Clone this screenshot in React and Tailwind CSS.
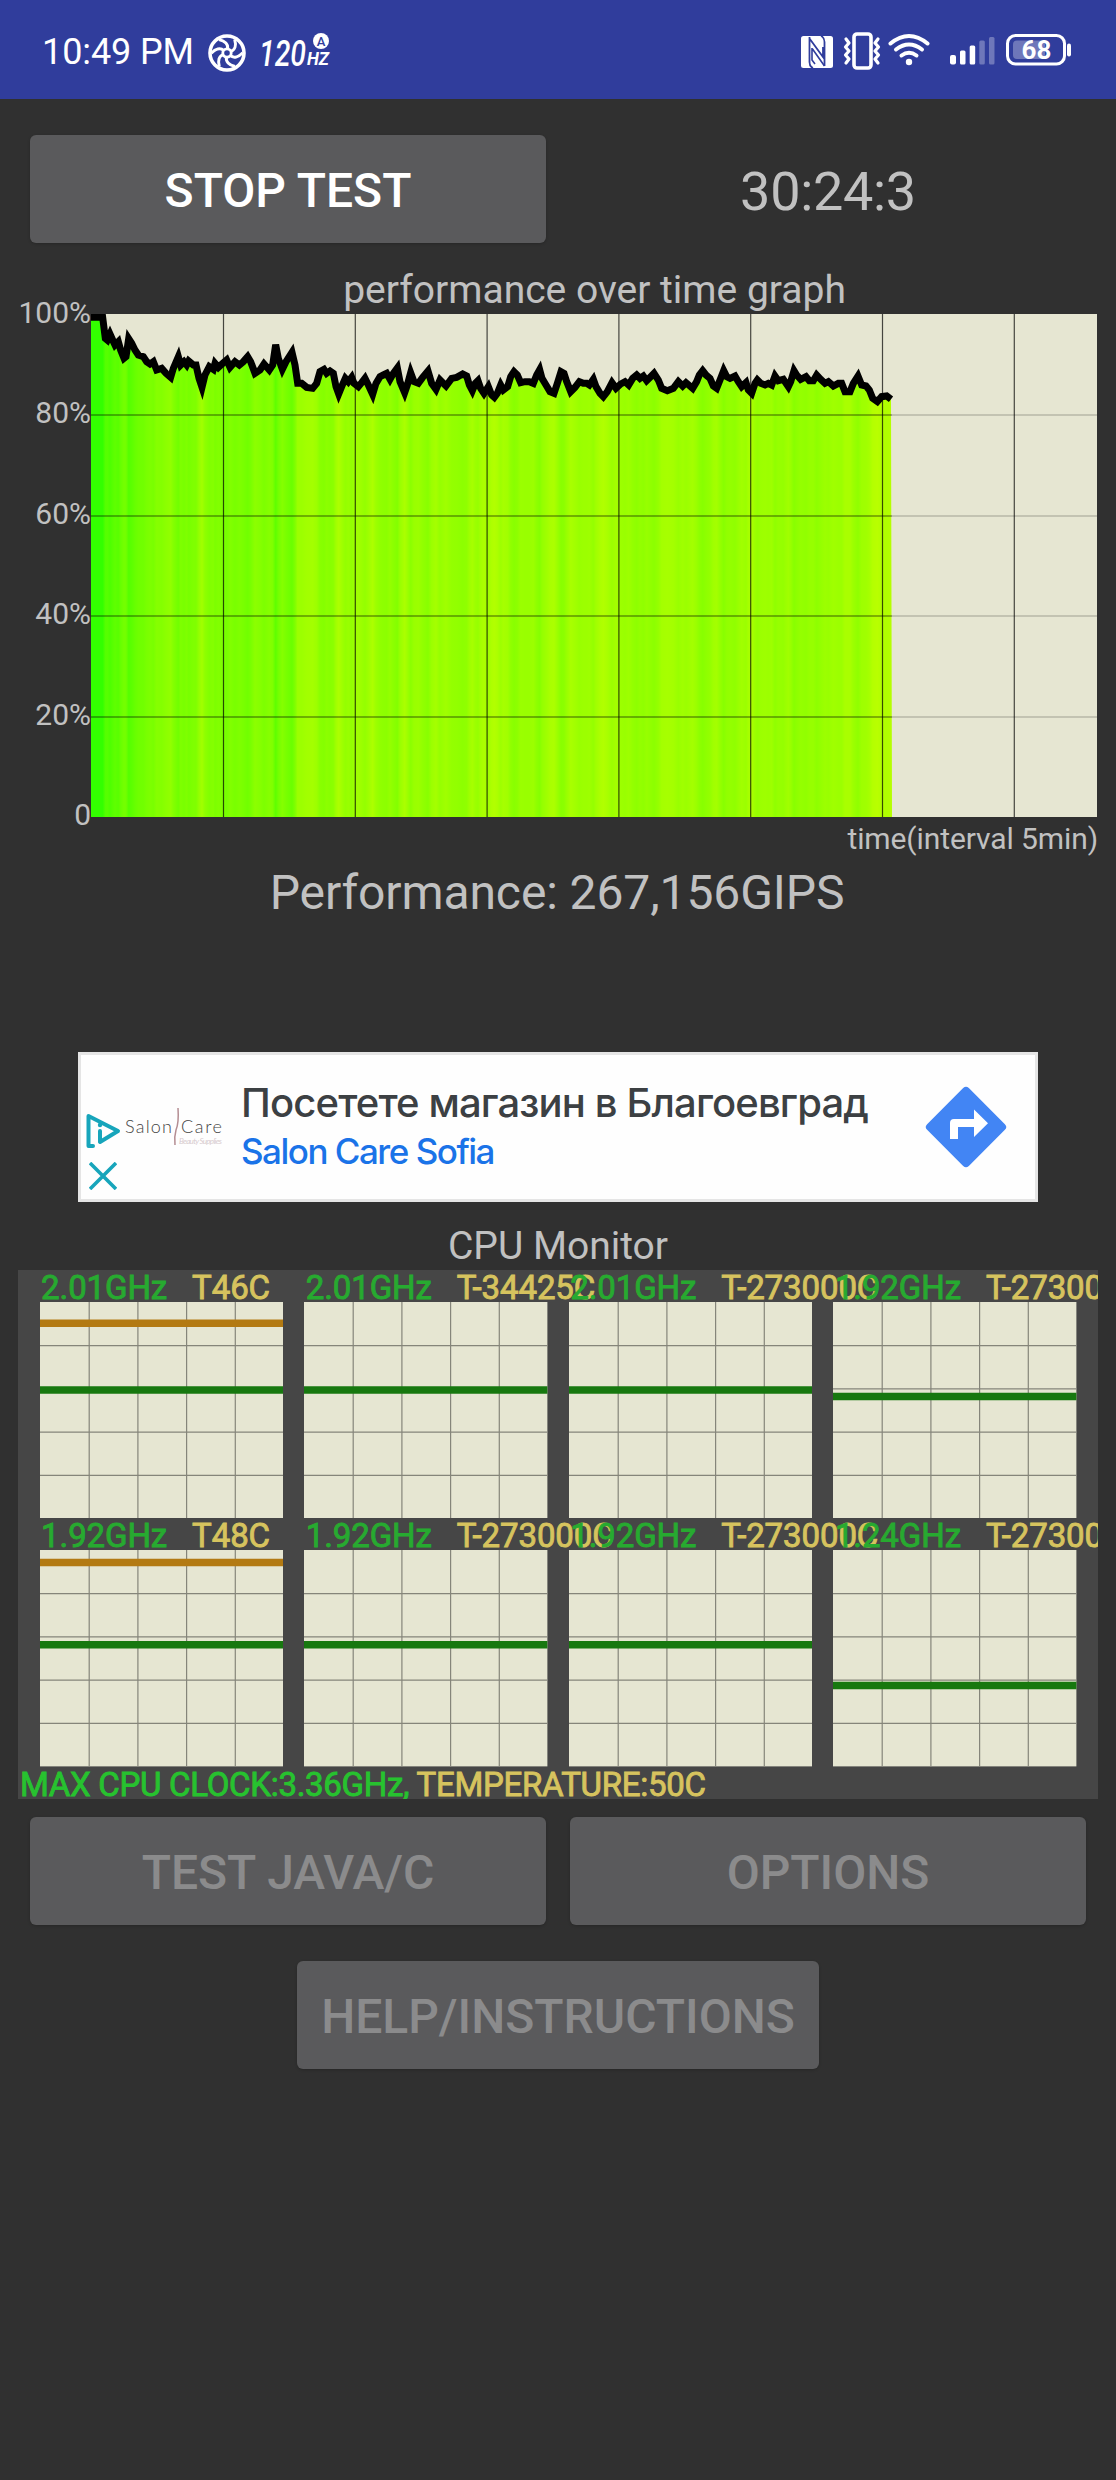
import React from 'react'

// trace samples as [x, y], in thirds of a pixel from the plot's top left corner
const firstTrace = [
  [0, 10], [35, 10], [43, 73], [49, 78], [57, 60], [65, 78], [72, 93], [82, 83], [89, 108], [99, 133],
  [105, 128], [113, 74], [122, 88], [132, 108], [142, 123], [157, 128], [167, 143], [177, 150], [187, 143], [197, 168],
  [212, 163], [225, 178], [239, 190], [247, 163], [262, 128], [269, 153], [279, 143], [287, 153], [293, 141], [307, 153],
  [315, 153], [324, 193], [333, 220], [342, 183], [355, 158], [367, 166], [372, 148], [382, 160], [395, 148], [407, 138],
  [417, 160], [432, 143], [445, 153], [457, 143], [470, 128], [479, 143], [492, 178], [507, 168], [519, 150], [535, 168],
  [545, 153], [554, 92], [562, 133], [574, 166], [585, 143], [603, 115], [612, 153], [620, 208], [632, 208], [647, 220],
  [665, 223], [677, 208], [687, 173], [699, 166], [707, 178], [717, 171], [727, 178], [735, 218], [743, 240], [752, 218],
  [763, 193], [772, 203], [782, 190], [789, 208], [802, 218], [812, 206], [822, 193], [832, 213], [845, 241], [855, 208],
  [867, 188], [877, 183], [887, 178], [897, 196], [907, 178], [919, 162], [927, 203], [941, 236], [949, 213], [959, 176],
  [969, 203], [982, 208], [995, 190], [1011, 171], [1022, 208], [1035, 226],
]

const secondTrace = [
  [0, 198], [18, 216], [35, 193], [50, 190], [68, 180], [80, 186], [88, 213], [97, 230], [106, 208], [114, 200],
  [122, 223], [132, 238], [145, 218], [155, 243], [163, 250], [172, 238], [182, 213], [190, 228], [203, 218], [212, 188],
  [222, 173], [232, 183], [242, 206], [255, 203], [268, 203], [280, 208], [290, 183], [299, 167], [306, 193], [318, 213],
  [330, 233], [342, 238], [352, 208], [363, 173], [372, 178], [380, 203], [392, 233], [405, 220], [418, 203], [430, 208],
  [440, 208], [448, 213], [460, 196], [468, 218], [480, 238], [490, 248], [502, 233], [516, 206], [528, 223], [542, 210],
  [555, 203], [566, 213], [578, 193], [590, 183], [600, 193], [610, 186], [620, 200], [632, 188], [642, 178], [655, 198],
  [665, 223], [682, 230], [700, 223], [715, 203], [728, 216], [738, 206], [758, 223], [770, 203], [778, 183], [788, 170],
  [798, 183], [810, 193], [820, 216], [830, 223], [840, 198], [851, 170], [860, 188], [870, 193], [885, 186], [895, 203],
  [905, 218], [918, 206], [925, 228], [935, 238], [945, 208], [952, 198], [962, 208], [975, 213], [985, 208], [995, 213],
  [1005, 186], [1015, 200], [1030, 196], [1045, 218], [1052, 203], [1062, 170], [1070, 183], [1082, 196], [1098, 188], [1108, 200],
  [1120, 200], [1130, 183], [1142, 196], [1155, 208], [1165, 203], [1180, 216], [1195, 208], [1205, 208], [1215, 233], [1230, 233],
  [1240, 208], [1254, 186], [1265, 213], [1278, 216], [1288, 228], [1298, 253], [1312, 263], [1325, 248], [1340, 246], [1353, 256],
]

const samples = [...firstTrace, ...secondTrace.map(([x, y]) => [x + 1047, y])].map(([x, y]) => [x / 3, y / 3])

const PLOT_W = 1006
const PLOT_H = 503
const DATA_W = 801

// full speed is green, slower gets more yellow
const speedColor = (y) => {
  const lost = Math.max(0, (y / PLOT_H) * 100 - 0.7)
  return `rgb(${Math.round(51 + lost * 8)},255,0)`
}

const cores = [
  { clock: '2.01GHz', temp: 'T46C', clockY: 88, tempY: 21.2 },
  { clock: '2.01GHz', temp: 'T-34425C', clockY: 88 },
  { clock: '2.01GHz', temp: 'T-273000C', clockY: 88 },
  { clock: '1.92GHz', temp: 'T-273000C', clockY: 94.4 },
  { clock: '1.92GHz', temp: 'T48C', clockY: 94.8, tempY: 12.6 },
  { clock: '1.92GHz', temp: 'T-273000C', clockY: 94.8 },
  { clock: '1.92GHz', temp: 'T-273000C', clockY: 94.8 },
  { clock: '1.24GHz', temp: 'T-273000C', clockY: 135.6 },
]

const StatusBar = () => (
  <header className="h-[99px] bg-[#303d9c] flex items-center text-white pl-[42px] pr-[44px] pt-[6px]">
    <span className="text-[36px] leading-[44px] w-[166px] pb-[2px] tracking-[-0.1px] whitespace-nowrap">10:49 PM</span>
    <svg width="38" height="38" viewBox="0 0 38 38" fill="none" stroke="currentColor">
      <circle cx="19" cy="19" r="17" strokeWidth="3.6" />
      <circle cx="19" cy="19" r="4.2" strokeWidth="2.8" />
      {[0, 60, 120, 180, 240, 300].map((a) => (
        <path key={a} d="M19.5 15 C20.5 10.5 17 7 11 5.5" strokeWidth="3" transform={`rotate(${a} 19 19)`} />
      ))}
    </svg>
    <svg className="ml-[12px]" width="75" height="44" viewBox="0 0 75 44" fill="currentColor">
      <text x="1" y="35" fontSize="37" fontStyle="italic" fontWeight="500" textLength="47" lengthAdjust="spacingAndGlyphs">120</text>
      <text x="49" y="34" fontSize="18" fontStyle="italic" fontWeight="700" textLength="22" lengthAdjust="spacingAndGlyphs">HZ</text>
      <circle cx="63" cy="10" r="8" />
      <text x="63" y="14.5" fontSize="13" fontWeight="500" textAnchor="middle" fill="#303d9c">A</text>
    </svg>

    <div className="ml-auto flex items-center">
      <svg className="-mt-[2px]" width="32" height="32" viewBox="0 0 32 32">
        <rect width="32" height="32" rx="2.5" fill="#fff" />
        <path d="M8.5 1 V26 Q8.5 30.5 12 32 M8.5 2.5 L22 21 V11 M23.5 30 V6 Q23.5 1.5 20 0" fill="none" stroke="#303d9c" strokeWidth="1.8" />
        <path d="M11.5 13 L23.5 30 M11 12 V24 L14 28" fill="none" stroke="#303d9c" strokeWidth="1.6" />
      </svg>
      <svg className="ml-[10px] -mt-[4px]" width="38" height="38" viewBox="0 0 38 38" fill="none" stroke="#fff" strokeWidth="3.2" strokeLinecap="round" strokeLinejoin="round">
        <rect x="11" y="2" width="17" height="34" rx="3" strokeWidth="3.6" />
        <path d="M3 7 L6 11 L2.5 15 L6 19 L2.5 23 L6 27 L3 31" />
        <path d="M35 7 L32 11 L35.5 15 L32 19 L35.5 23 L32 27 L35 31" />
      </svg>
      <svg className="ml-[7px] -mt-[6px]" width="42" height="34" viewBox="0 0 42 34" fill="none" stroke="#fff" strokeWidth="4" strokeLinecap="round">
        <path d="M2.5 10.5 Q21 -4.5 39.5 10.5" />
        <path d="M8 16.5 Q21 6.5 34 16.5" />
        <path d="M13.5 22.5 Q21 17 28.5 22.5" />
        <circle cx="21" cy="29" r="3.2" fill="#fff" stroke="none" />
      </svg>
      <svg className="ml-[20px]" width="46" height="32" viewBox="0 0 46 32" fill="#fff">
        <rect x="0" y="18" width="6" height="9.5" rx="2" />
        <rect x="10" y="13.5" width="5.5" height="14" rx="1.5" />
        <rect x="19.7" y="8.5" width="5.5" height="19" rx="1.5" />
        <rect x="29.3" y="3.5" width="5.5" height="24" rx="1.5" fillOpacity=".3" />
        <rect x="39" y="0" width="5.5" height="27.5" rx="1.5" fillOpacity=".3" />
      </svg>
      <svg className="ml-[10px] -mt-[6px]" width="66" height="32" viewBox="0 0 66 32">
        <rect x="1.5" y="1.5" width="57" height="28.5" rx="8" fill="none" stroke="#fff" strokeWidth="3" />
        <rect x="7" y="6.5" width="32" height="18.5" rx="4" fill="#fff" fillOpacity=".3" />
        <rect x="61" y="9.5" width="4" height="13" rx="2" fill="#fff" />
        <text x="30.5" y="24.5" fontSize="26" fontWeight="700" fill="#fff" textAnchor="middle">68</text>
      </svg>
    </div>
  </header>
)

const Button = ({ children, active, width = 'w-[516px]' }) => (
  <button
    className={`${width} h-[108px] shrink-0 rounded-[6px] bg-[#5a5a5c] pt-[3px] text-[48px] leading-none font-medium whitespace-nowrap shadow-[0_1px_3px_rgba(0,0,0,0.2)] ${active ? 'text-white' : 'text-[#8b8b8c]'}`}
    type="button"
  >
    {children}
  </button>
)

const PerformanceChart = () => (
  <div className="flex h-[503px]">
    <div className="w-[91px] -mt-[16px] h-[532px] flex flex-col justify-between items-end text-[30px] leading-none">
      {['100%', '80%', '60%', '40%', '20%', '0'].map((label) => (
        <span key={label}>{label}</span>
      ))}
    </div>
    <svg width={PLOT_W} height={PLOT_H} viewBox={`0 0 ${PLOT_W} ${PLOT_H}`}>
      <defs>
        <linearGradient id="speed" gradientUnits="userSpaceOnUse" x1="0" y1="0" x2={DATA_W} y2="0">
          {samples.map(([x, y]) => (
            <stop key={x} offset={x / DATA_W} stopColor={speedColor(y)} />
          ))}
        </linearGradient>
      </defs>
      <rect width={PLOT_W} height={PLOT_H} fill="#e6e6d2" />
      <path d={`M0 ${PLOT_H} L${samples.map((p) => p.join(' ')).join(' L')} L${DATA_W} ${PLOT_H} Z`} fill="url(#speed)" />
      {[101, 202, 302, 403].map((y) => (
        <g key={y}>
          <line x1="0" x2={DATA_W} y1={y} y2={y} stroke="#000" strokeOpacity=".42" strokeWidth="1.5" />
          <line x1={DATA_W} x2={PLOT_W} y1={y} y2={y} stroke="#000" strokeOpacity=".2" strokeWidth="1.5" />
        </g>
      ))}
      {[0, 1, 2, 3, 4, 5, 6].map((i) => (
        <line key={i} x1={132.5 + i * 131.8} x2={132.5 + i * 131.8} y1="0" y2={PLOT_H} stroke="#000" strokeOpacity=".7" strokeWidth="1.2" />
      ))}
      <rect width="14" height="6" />
      <polyline points={samples.map((p) => p.join(',')).join(' ')} fill="none" stroke="#000" strokeWidth="7" strokeLinejoin="miter" />
    </svg>
  </div>
)

const AdBanner = () => (
  <div className="mt-[135px] mx-auto w-[960px] h-[150px] bg-[#fefefe] border-[3px] border-[#e5e5e5] flex items-center">
    <div className="w-[36px] h-full ml-[4px] pt-[57px] flex flex-col items-center gap-[12px]">
      <svg width="36" height="38" viewBox="0 0 36 38" fill="none" stroke="#17a5bb" strokeWidth="4" strokeLinejoin="round" strokeLinecap="round">
        <path d="M8 34 H3.5 V4 L33 19 L15 30 V19" />
        <circle cx="15" cy="13" r="2.2" fill="#17a5bb" stroke="none" />
      </svg>
      <svg width="28" height="28" viewBox="0 0 28 28" stroke="#17a5bb" strokeWidth="3.6">
        <path d="M1 1 L27 27 M27 1 L1 27" />
      </svg>
    </div>
    <svg width="100" height="44" viewBox="0 0 100 44" className="ml-[3px]">
      <text x="1" y="28" fontSize="18" fontWeight="300" fill="#444" textLength="47" fontFamily="Lato, sans-serif">Salon</text>
      <text x="57" y="28" fontSize="18" fontWeight="300" fill="#444" textLength="41" fontFamily="Lato, sans-serif">Care</text>
      <path d="M54 3 Q55 18 52 25 Q50 32 51 40" fill="none" stroke="#b48d92" strokeWidth="1.5" />
      <text x="55" y="39" fontSize="8" fontStyle="italic" fill="#d8cccf" textLength="43" fontFamily="Lato, sans-serif">Beauty Supplies</text>
    </svg>
    <div className="ml-[17px] w-[660px] whitespace-nowrap font-['Inter','Noto_Sans',sans-serif] font-medium">
      <p className="text-[40px] leading-[48px] tracking-[-0.85px] text-[#3c4043]">Посетете магазин в Благоевград</p>
      <p className="text-[35px] leading-[48px] tracking-[-1.5px] text-[#1a73e8]">Salon Care Sofia</p>
    </div>
    <svg className="ml-[24px]" width="82" height="82" viewBox="0 0 82 82">
      <rect x="11.5" y="11.5" width="59" height="59" rx="4" fill="#4285f4" transform="rotate(45 41 41)" />
      <path d="M25 53 V37 Q25 33 29 33 H49 V23.5 L63 37.3 L49 51 V41 H33 V53 Z" fill="#fff" />
    </svg>
  </div>
)

const Core = ({ core }) => (
  <div className="w-[264.6px]">
    <div className="flex h-[32px] pl-[1.5px] text-[33px] leading-[36px] tracking-[-0.1px] whitespace-nowrap [-webkit-text-stroke-width:0.9px]">
      <span className="w-[151px] shrink-0 text-[#27aa30]">{core.clock}</span>
      <span className="text-[#d6c35e]">{core.temp}</span>
    </div>
    <svg width="243.4" height="216.4" viewBox="0 0 243.4 216.4" className="block">
      <rect width="243.4" height="216.4" fill="#e6e6d2" />
      {[1, 2, 3, 4].map((i) => (
        <g key={i} stroke="#85857a" strokeWidth="1.2">
          <line x1={i * 48.7 + 0.5} x2={i * 48.7 + 0.5} y1="0" y2="216.4" />
          <line x1="0" x2="243.4" y1={i * 43.2 + 0.5} y2={i * 43.2 + 0.5} />
        </g>
      ))}
      {core.tempY && <line x1="0" x2="243.4" y1={core.tempY} y2={core.tempY} stroke="#b37a12" strokeWidth="7.5" />}
      <line x1="0" x2="243.4" y1={core.clockY} y2={core.clockY} stroke="#17780f" strokeWidth="7.5" />
    </svg>
  </div>
)

const CpuMonitor = () => (
  <section className="mt-[5px] ml-[18px] w-[1080px] h-[529px] bg-[#464646] overflow-hidden">
    <div className="flex flex-wrap w-[1090px] pl-[21.6px]">
      {cores.map((core, i) => (
        <Core key={i} core={core} />
      ))}
    </div>
    <p className="pl-[2px] text-[33px] leading-[35px] whitespace-nowrap tracking-[-0.29px] [-webkit-text-stroke-width:0.9px] text-[#27c22f]">
      MAX CPU CLOCK:3.36GHz, <span className="text-[#d6c35e]">TEMPERATURE:50C</span>
    </p>
  </section>
)

const App = () => {
  return (
    <div className="w-[1116px] h-[2480px] overflow-hidden bg-[#303030] text-[#c1c1c1] font-['Roboto',sans-serif]">
      <StatusBar />

      <div className="pt-[36px] pl-[30px] flex items-center">
        <Button active>STOP TEST</Button>
        <span className="w-[564px] pt-[5px] text-center text-[54px] leading-none tracking-[-0.3px]">30:24:3</span>
      </div>

      <h2 className="h-[71px] pt-[27px] pl-[73px] text-center text-[39px] leading-[40px]">performance over time graph</h2>
      <PerformanceChart />
      <p className="mt-[7px] pr-[18px] text-right text-[30px] leading-none tracking-[-0.1px]">time(interval 5min)</p>
      <p className="mt-[15px] pr-[2px] text-center text-[48px] leading-none tracking-[-0.1px]">Performance: 267,156GIPS</p>

      <AdBanner />

      <h2 className="mt-[24px] -mb-[1px] text-center text-[39px] leading-[40px]">CPU Monitor</h2>
      <CpuMonitor />

      <div className="mt-[18px] px-[30px] flex gap-6">
        <Button>TEST JAVA/C</Button>
        <Button>OPTIONS</Button>
      </div>
      <div className="mt-[36px] flex justify-center">
        <Button width="w-[522px]">HELP/INSTRUCTIONS</Button>
      </div>
    </div>
  )
}

export default App
